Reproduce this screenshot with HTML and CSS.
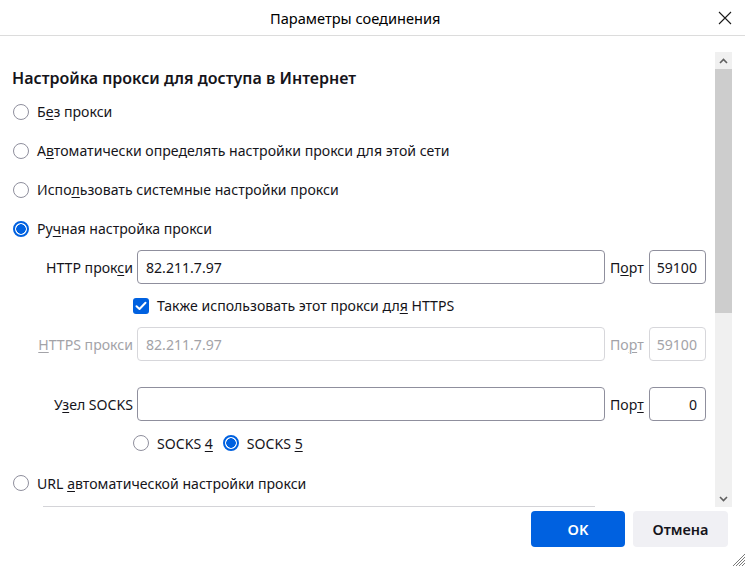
FILE: index.html
```html
<!DOCTYPE html>
<html lang="ru">
<head>
<meta charset="utf-8">
<title>Параметры соединения</title>
<link rel="stylesheet" href="styles.css">
</head>
<body>
<div class="dialog">
  <header class="titlebar">
    <span class="title">Параметры соединения</span>
    <svg class="close" width="14" height="14" viewBox="0 0 14 14"><path d="M1 1 L13 13 M13 1 L1 13" stroke="#1a1a1a" stroke-width="1.1" fill="none"/></svg>
  </header>
  <div class="body">
    <div class="content">
      <h1 class="heading">Настройка прокси для доступа в Интернет</h1>
      <div class="radio-row"><span class="radio"></span><span>Б<u>е</u>з прокси</span></div>
      <div class="radio-row"><span class="radio"></span><span>А<u>в</u>томатически определять настройки прокси для этой сети</span></div>
      <div class="radio-row"><span class="radio"></span><span>Испо<u>л</u>ьзовать системные настройки прокси</span></div>
      <div class="radio-row"><span class="radio checked"></span><span>Ру<u>ч</u>ная настройка прокси</span></div>

      <div class="field-row first">
        <span class="label">HTTP прок<u>с</u>и</span>
        <span class="input">82.211.7.97</span>
        <span class="port-label">П<u>о</u>рт</span>
        <span class="input port">59100</span>
      </div>
      <div class="check-row">
        <span class="checkbox"><svg width="12" height="10" viewBox="0 0 12 10"><path d="M1.5 5.2 L4.5 8 L10.5 1.8" stroke="#fff" stroke-width="2" fill="none" stroke-linecap="round" stroke-linejoin="round"/></svg></span>
        <span>Также использовать этот прокси дл<u>я</u> HTTPS</span>
      </div>
      <div class="field-row disabled">
        <span class="label"><u>H</u>TTPS прокси</span>
        <span class="input">82.211.7.97</span>
        <span class="port-label">По<u>р</u>т</span>
        <span class="input port">59100</span>
      </div>
      <div class="field-row socks">
        <span class="label">У<u>з</u>ел SOCKS</span>
        <span class="input"></span>
        <span class="port-label">Пор<u>т</u></span>
        <span class="input port">0</span>
      </div>
      <div class="socks-row">
        <span class="radio"></span><span class="socks-text">SOCKS <u>4</u></span>
        <span class="radio checked"></span><span>SOCKS <u>5</u></span>
      </div>
      <div class="radio-row last"><span class="radio"></span><span>URL <u>а</u>втоматической настройки прокси</span></div>
      <div class="cutline"></div>
    </div>
    <div class="scrollbar">
      <div class="sb-btn"><svg width="9" height="6" viewBox="0 0 9 6"><path d="M1 5 L4.5 1.5 L8 5" stroke="#606060" stroke-width="1.6" fill="none"/></svg></div>
      <div class="sb-thumb"></div>
      <div class="sb-track"></div>
      <div class="sb-btn"><svg width="9" height="6" viewBox="0 0 9 6"><path d="M1 1 L4.5 4.5 L8 1" stroke="#606060" stroke-width="1.6" fill="none"/></svg></div>
    </div>
  </div>
  <footer class="buttons">
    <button class="btn primary">OK</button>
    <button class="btn">Отмена</button>
  </footer>
  <svg class="grip" width="13" height="13" viewBox="0 0 13 13"><path d="M13 1 L1 13 M13 4 L4 13 M13 7 L7 13 M13 10 L10 13" stroke="#7a7a7a" stroke-width="1" fill="none"/></svg>
</div>
</body>
</html>
```
FILE: styles.css
```css
* { box-sizing: border-box; }
html, body { margin: 0; padding: 0; background: #fff; }
body {
  font-family: "Noto Sans", "Open Sans", sans-serif;
  font-size: 14.1px;
  color: #15141a;
}
u { text-decoration-thickness: 1px; text-underline-offset: 2px; }
.dialog { position: relative; width: 745px; height: 566px; overflow: hidden; }
.titlebar {
  height: 36px;
  border-bottom: 1px solid #dcdcdc;
  display: flex;
  align-items: center;
  padding-left: 270px;
}
.title { font-size: 14.6px; color: #000; }
.close { margin-left: auto; margin-right: 13px; }
.body { display: flex; height: 471px; }
.content { flex: 1; overflow: hidden; }
.heading {
  margin: 31px 0 3px 12px;
  font-size: 16px;
  font-weight: 600;
  line-height: 22px;
}
.radio-row { height: 39px; display: flex; align-items: center; padding-left: 13px; }
.radio-row.last { height: 36px; }
.radio {
  width: 16px; height: 16px;
  border: 1px solid #8f8f9d;
  border-radius: 50%;
  margin-right: 8px;
  flex: none;
  background: #fff;
}
.radio.checked {
  border: 2px solid #0061e0;
  background: radial-gradient(circle, #0061e0 0 4.5px, #fff 5px);
}
.field-row {
  display: grid;
  grid-template-columns: 137px 468px 44px 57px;
  height: 34px;
  align-items: center;
}
.field-row.first { margin-top: 2px; }
.field-row.socks { margin-top: 26px; }
.label { text-align: right; padding-right: 4px; white-space: nowrap; }
.port-label { padding-left: 5px; white-space: nowrap; }
.input {
  height: 34px;
  border: 1px solid #8f8f9d;
  border-radius: 4px;
  padding: 0 8px;
  display: flex;
  align-items: center;
}
.input.port { justify-content: flex-end; }
.disabled { color: #a3a3a8; }
.disabled .input { border-color: #d7d7db; }
.check-row { height: 43px; display: flex; align-items: center; padding-left: 133px; }
.checkbox {
  width: 16px; height: 16px;
  background: #0061e0;
  border-radius: 3px;
  margin-right: 8px;
  display: flex; align-items: center; justify-content: center;
}
.socks-row { height: 44px; display: flex; align-items: center; padding-left: 133px; }
.socks-text { margin-right: 10px; }
.cutline { margin: 5px 0 0 43px; width: 552px; height: 1px; background: #d4d4d8; }
.scrollbar {
  width: 17px;
  margin: 16px 13px 0 0;
  display: flex;
  flex-direction: column;
  background: #f0f0f0;
}
.sb-btn { height: 17px; display: flex; align-items: center; justify-content: center; }
.sb-thumb { height: 244px; background: #cdcdcd; }
.sb-track { flex: 1; }
.buttons {
  display: flex;
  justify-content: flex-end;
  gap: 8px;
  margin-top: 4px;
  padding-right: 17px;
}
.btn {
  width: 95px;
  height: 36px;
  border: none;
  border-radius: 4px;
  background: #f0f0f4;
  color: #15141a;
  font-family: inherit;
  font-size: 14.5px;
  font-weight: 600;
}
.btn.primary { background: #0061e0; color: #fff; width: 94px; }
.grip { position: absolute; right: 0; bottom: 0; }
```
